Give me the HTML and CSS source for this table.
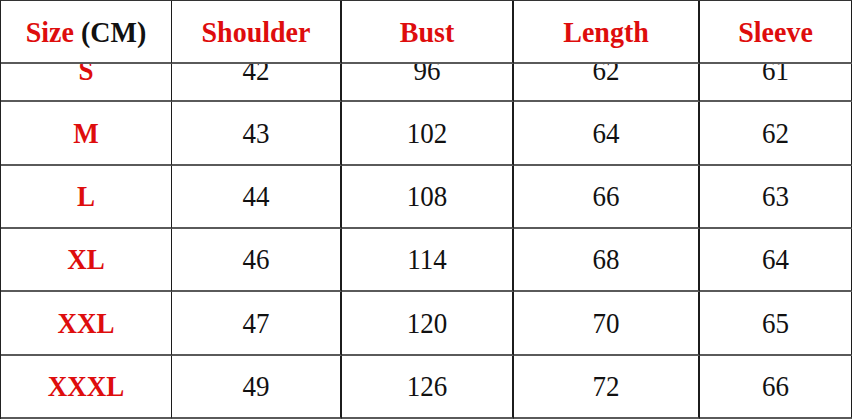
FILE: index.html
```html
<!DOCTYPE html>
<html>
<head>
<meta charset="utf-8">
<link rel="stylesheet" href="styles.css">
</head>
<body>
<div class="chart">
  <div class="cell head"><span class="txt"><span class="red">Size</span>&nbsp;<span class="black">(CM)</span></span></div>
  <div class="cell head red"><span class="txt">Shoulder</span></div>
  <div class="cell head red"><span class="txt">Bust</span></div>
  <div class="cell head red"><span class="txt">Length</span></div>
  <div class="cell head red"><span class="txt">Sleeve</span></div>

  <div class="cell cut size"><span class="txt">S</span></div>
  <div class="cell cut"><span class="txt">42</span></div>
  <div class="cell cut"><span class="txt">96</span></div>
  <div class="cell cut"><span class="txt">62</span></div>
  <div class="cell cut"><span class="txt">61</span></div>

  <div class="cell size"><span class="txt">M</span></div>
  <div class="cell"><span class="txt">43</span></div>
  <div class="cell"><span class="txt">102</span></div>
  <div class="cell"><span class="txt">64</span></div>
  <div class="cell"><span class="txt">62</span></div>

  <div class="cell size"><span class="txt">L</span></div>
  <div class="cell"><span class="txt">44</span></div>
  <div class="cell"><span class="txt">108</span></div>
  <div class="cell"><span class="txt">66</span></div>
  <div class="cell"><span class="txt">63</span></div>

  <div class="cell size"><span class="txt">XL</span></div>
  <div class="cell"><span class="txt">46</span></div>
  <div class="cell"><span class="txt">114</span></div>
  <div class="cell"><span class="txt">68</span></div>
  <div class="cell"><span class="txt">64</span></div>

  <div class="cell size"><span class="txt">XXL</span></div>
  <div class="cell"><span class="txt">47</span></div>
  <div class="cell"><span class="txt">120</span></div>
  <div class="cell"><span class="txt">70</span></div>
  <div class="cell"><span class="txt">65</span></div>

  <div class="cell size"><span class="txt">XXXL</span></div>
  <div class="cell"><span class="txt">49</span></div>
  <div class="cell"><span class="txt">126</span></div>
  <div class="cell"><span class="txt">72</span></div>
  <div class="cell"><span class="txt">66</span></div>
</div>
</body>
</html>
```
FILE: styles.css
```css
html, body {
  margin: 0;
  padding: 0;
  background: #ffffff;
}

.chart {
  width: 852px;
  box-sizing: border-box;
  display: grid;
  grid-template-columns: 171px 170px 172px 186px 153px;
  grid-template-rows: 63px 38px 64px 63px 63px 64px 63px;
  border-top: 1px solid #333;
  border-left: 1px solid #222;
  font-family: "Liberation Serif", "Times New Roman", serif;
  color: #111;
}

.cell {
  box-sizing: border-box;
  display: flex;
  align-items: center;
  justify-content: center;
  border-right: 2px solid #1c1c1c;
  border-bottom: 2px solid #5a5a5a;
  font-size: 27px;
  overflow: hidden;
}

.cell:nth-child(5n+1) {
  border-right-width: 1.5px;
}

.txt {
  display: block;
  transform: scaleY(1.08);
}

.head {
  font-size: 28px;
  font-weight: bold;
  padding-top: 1px;
}

.red {
  color: #de0d0d;
}

.black {
  color: #111;
}

.size {
  color: #de0d0d;
  font-weight: bold;
}

.cut {
  align-items: flex-start;
}

.cut .txt {
  line-height: 63px;
  margin-top: -25px;
}
```
